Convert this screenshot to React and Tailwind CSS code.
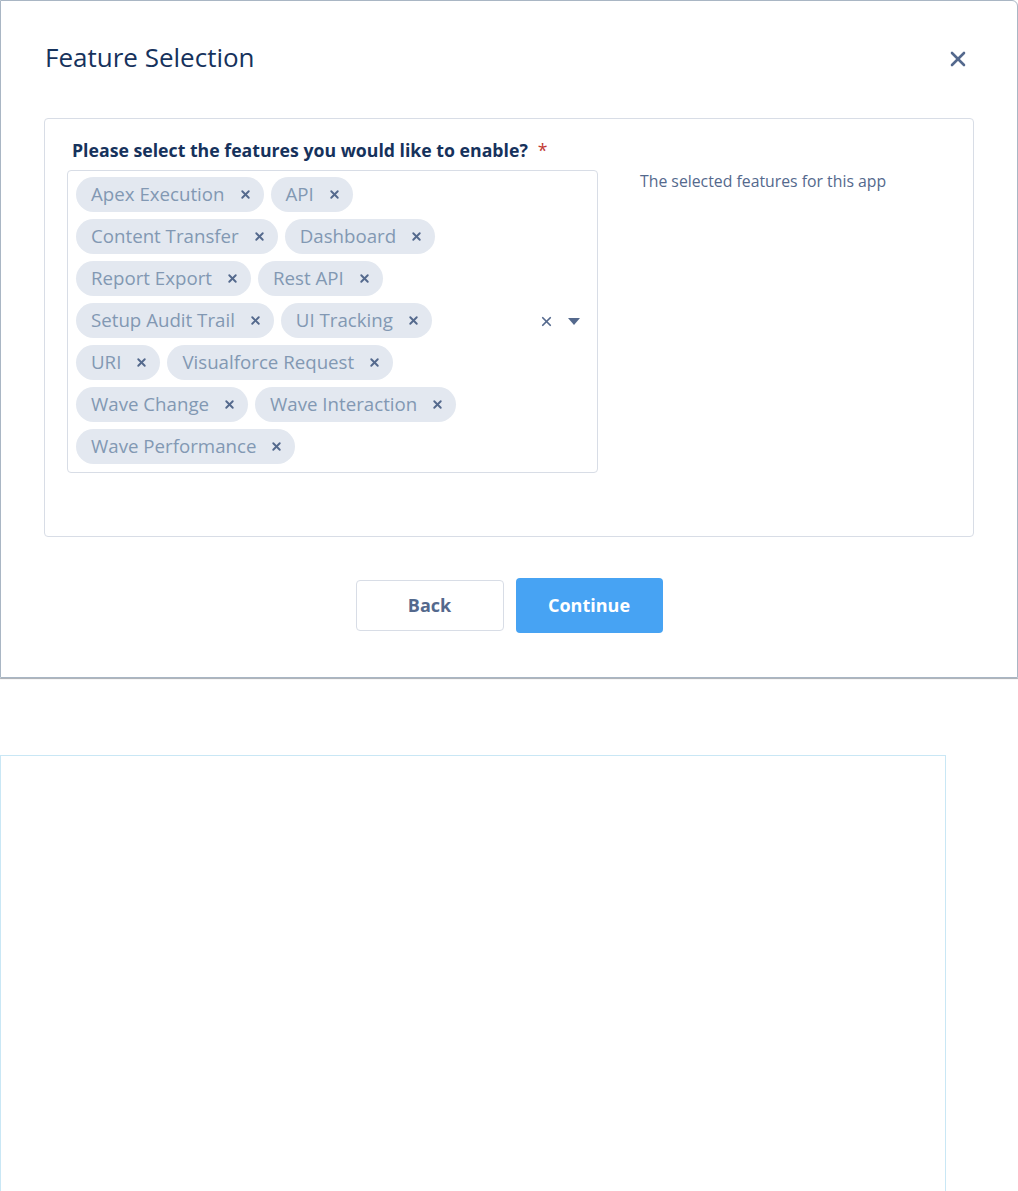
import { X } from "lucide-react";

const rows = [
  ["Apex Execution", "API"],
  ["Content Transfer", "Dashboard"],
  ["Report Export", "Rest API"],
  ["Setup Audit Trail", "UI Tracking"],
  ["URI", "Visualforce Request"],
  ["Wave Change", "Wave Interaction"],
  ["Wave Performance"],
];

const Pill = ({ label }) => (
  <span className="flex h-[35px] items-center rounded-full bg-[#e3e8f0] pl-[15px] pr-[12px] text-[18.7px] text-[#8298b3]">
    <span>{label}</span>
    <span className="ml-[14px] text-[#54698d]">
      <X size={13} strokeWidth={3.5} />
    </span>
  </span>
);

const App = () => {
  return (
    <div className="min-h-[1191px] bg-white font-['Open_Sans',sans-serif]">
      {/* Modal */}
      <div className="w-[1018px] rounded-tr-[6px] border border-[#a9b6c4] shadow-[0_1px_1px_rgba(80,90,100,0.5)]">
        <div className="flex h-[117px] items-start justify-between pl-[44px] pr-[47px] pt-[38px]">
          <h1 className="text-[26px] leading-[36px] text-[#16325c]">Feature Selection</h1>
          <button className="mt-[8px] text-[#54698d]">
            <X size={24} strokeWidth={2.6} />
          </button>
        </div>

        <div className="mx-[43px] rounded-[4px] border border-[#d8dde6] pb-[63px] pl-[22px] pt-[20px]">
          <div className="flex">
            <div>
              <div className="pl-[5px] text-[17.7px] font-bold leading-[22px] text-[#16325c]">
                Please select the features you would like to enable?
                <span className="ml-[10px] font-normal text-[#c23934]">*</span>
              </div>
              <div className="mt-[9px] flex h-[303px] w-[531px] items-center rounded-[4px] border border-[#d8dde6] pl-[8px] pr-[17px]">
                <div className="flex flex-col gap-[7px] self-start pt-[6px]">
                  {rows.map((row, i) => (
                    <div key={i} className="flex gap-[7px]">
                      {row.map((f) => (
                        <Pill key={f} label={f} />
                      ))}
                    </div>
                  ))}
                </div>
                <div className="ml-auto flex items-center gap-[14px] text-[#54698d]">
                  <X size={15} strokeWidth={2.8} />
                  <svg width="12" height="8" viewBox="0 0 12 8">
                    <path d="M0 0h12L6 7z" fill="#54698d" />
                  </svg>
                </div>
              </div>
            </div>
            <div className="pl-[42px] pt-[31px] text-[15.8px] leading-[22px] text-[#54698d]">
              The selected features for this app
            </div>
          </div>
        </div>

        <div className="flex h-[140px] items-center justify-center gap-[12px] pb-[4px]">
          <button className="h-[51px] w-[148px] rounded-[4px] border border-[#d8dde6] bg-white text-[18px] font-bold text-[#54698d]">
            Back
          </button>
          <button className="h-[55px] w-[147px] rounded-[4px] bg-[#47a3f3] text-[18px] font-bold text-white">
            Continue
          </button>
        </div>
      </div>

      {/* Lower panel */}
      <div className="mt-[77px] h-[437px] w-[946px] border-l border-r border-t border-[#c9e7f5]" />
    </div>
  );
};

export default App;
